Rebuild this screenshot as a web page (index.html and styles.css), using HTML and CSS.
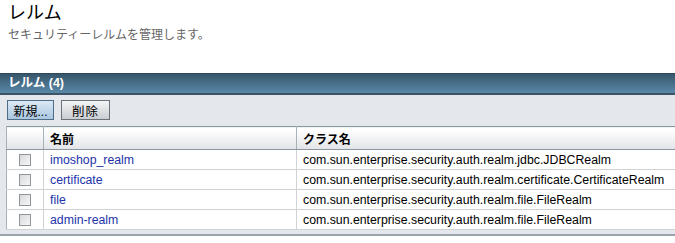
FILE: index.html
```html
<!DOCTYPE html>
<html lang="ja">
<head>
    <meta charset="UTF-8">
    <title>レルム</title>
    <link rel="stylesheet" href="styles.css">
</head>
<body>
    <div class="page-head">
        <h1 class="page-title">レルム</h1>
        <p class="page-help">セキュリティーレルムを管理します。</p>
    </div>

    <div class="panel">
        <div class="panel-title">レルム (4)</div>
        <div class="toolbar">
            <button class="btn btn-primary">新規...</button>
            <button class="btn btn-delete">削除</button>
        </div>
        <table class="grid">
            <thead>
                <tr>
                    <th class="col-check"></th>
                    <th class="col-name">名前</th>
                    <th class="col-class">クラス名</th>
                </tr>
            </thead>
            <tbody>
                <tr>
                    <td class="col-check"><span class="box"></span></td>
                    <td><a href="#">imoshop_realm</a></td>
                    <td>com.sun.enterprise.security.auth.realm.jdbc.JDBCRealm</td>
                </tr>
                <tr>
                    <td class="col-check"><span class="box"></span></td>
                    <td><a href="#">certificate</a></td>
                    <td>com.sun.enterprise.security.auth.realm.certificate.CertificateRealm</td>
                </tr>
                <tr>
                    <td class="col-check"><span class="box"></span></td>
                    <td><a href="#">file</a></td>
                    <td>com.sun.enterprise.security.auth.realm.file.FileRealm</td>
                </tr>
                <tr>
                    <td class="col-check"><span class="box"></span></td>
                    <td><a href="#">admin-realm</a></td>
                    <td>com.sun.enterprise.security.auth.realm.file.FileRealm</td>
                </tr>
            </tbody>
        </table>
    </div>
</body>
</html>
```

FILE: styles.css
```css
body {
    margin: 0;
    background: #ffffff;
    font-family: "Liberation Sans", "Noto Sans CJK JP", sans-serif;
    font-size: 12px;
    color: #000000;
    overflow: hidden;
}

.page-head {
    padding: 2px 8px 0;
    height: 71px;
}

.page-title {
    margin: 0;
    font-size: 18px;
    font-weight: normal;
    line-height: 22px;
}

.page-help {
    margin: 3px 0 0;
    font-size: 12px;
    color: #666666;
    line-height: 16px;
}

.panel {
    width: 690px;
    background: #e4e7ec;
    border-bottom: 2px solid #9aa4ac;
    padding-bottom: 4px;
}

.panel-title {
    height: 19px;
    line-height: 19px;
    padding-left: 8px;
    color: #ffffff;
    font-weight: bold;
    font-size: 12.5px;
    background: linear-gradient(#37566b, #5a88a8);
    border-top: 1px solid #2f4a5c;
    border-bottom: 2px solid #3c5566;
}

.toolbar {
    display: flex;
    gap: 7px;
    padding: 5px 7px 6px;
}

.btn {
    font-family: inherit;
    font-size: 12.5px;
    height: 20px;
    padding: 0;
    border: 1px solid #6b7379;
    background: linear-gradient(#f4f5f6, #c9cdd1);
    color: #000;
    letter-spacing: 1px;
}

.btn-primary {
    width: 47px;
    font-size: 12px;
    letter-spacing: 0;
    background: linear-gradient(#dbe9f6, #a9c6e0);
    border-color: #4f6d87;
}

.btn-delete {
    width: 49px;
}

.grid {
    margin-left: 6px;
    width: 684px;
    border-collapse: collapse;
    background: #ffffff;
    border-left: 1px solid #a7b1b8;
    border-top: 1px solid #8a97a0;
}

.grid th {
    height: 22px;
    padding: 0 6px;
    text-align: left;
    font-weight: bold;
    background: linear-gradient(#ffffff 10%, #e2e4e7);
    border-left: 1px solid #a7b1b8;
    border-bottom: 1px solid #8a97a0;
}

.grid td {
    height: 19px;
    padding: 0 6px;
    border-left: 1px solid #cfd3d6;
    border-bottom: 1px solid #cfd3d6;
    font-size: 12.3px;
    line-height: 14px;
    white-space: nowrap;
}

.col-check {
    width: 24px;
    text-align: center;
}

.grid td.col-check {
    border-left: 1px solid #a7b1b8;
    padding: 0;
}

.col-name {
    width: 240px;
}

.grid a {
    color: #2233aa;
    text-decoration: none;
}

.box {
    display: inline-block;
    width: 10px;
    height: 10px;
    border: 1px solid #8f9599;
    background: linear-gradient(135deg, #d7d9db, #f7f7f7);
    vertical-align: middle;
}
```
